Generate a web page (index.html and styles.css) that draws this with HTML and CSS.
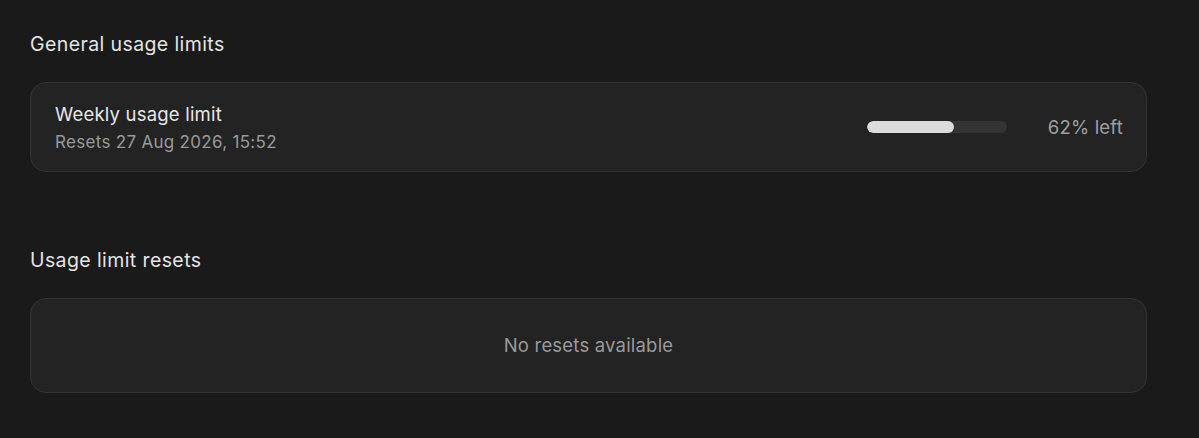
FILE: index.html
```html
<!DOCTYPE html>
<html lang="en">
<head>
<meta charset="utf-8">
<link rel="stylesheet" href="styles.css">
</head>
<body>
<main class="page">
  <section class="section">
    <h2 class="section-title">General usage limits</h2>
    <div class="card limit-card">
      <div class="limit-info">
        <div class="limit-name">Weekly usage limit</div>
        <div class="limit-reset">Resets 27 Aug 2026, 15:52</div>
      </div>
      <div class="limit-meter">
        <div class="bar"><div class="bar-fill" style="width:62%"></div></div>
        <div class="limit-left">62% left</div>
      </div>
    </div>
  </section>
  <section class="section">
    <h2 class="section-title">Usage limit resets</h2>
    <div class="card empty-card">No resets available</div>
  </section>
</main>
</body>
</html>
```
FILE: styles.css
```css
html, body {
  margin: 0;
  padding: 0;
  background: #1a1a1a;
}
body {
  font-family: Inter, "Noto Sans", "Liberation Sans", sans-serif;
  color: #e6e6e6;
  -webkit-font-smoothing: antialiased;
}
.page {
  width: 1117px;
  padding: 32px 0 0 30px;
  display: flex;
  flex-direction: column;
  gap: 76px;
}
.section {
  display: flex;
  flex-direction: column;
  gap: 26px;
}
.section-title {
  margin: 0;
  font-size: 19.5px;
  line-height: 24px;
  font-weight: 400;
  color: #e4e4e4;
  letter-spacing: 0.4px;
}
.card {
  box-sizing: border-box;
  background: #232323;
  border: 1px solid #343434;
  border-radius: 16px;
}
.limit-card {
  height: 90px;
  padding: 0 23px 0 24px;
  display: flex;
  align-items: center;
  justify-content: space-between;
}
.limit-info {
  display: flex;
  flex-direction: column;
  gap: 6px;
  padding-top: 2px;
}
.limit-name {
  font-size: 18.5px;
  line-height: 22px;
  color: #e8e8e8;
  letter-spacing: 0.2px;
}
.limit-reset {
  font-size: 17px;
  line-height: 22px;
  color: #9a9a9a;
  letter-spacing: 0.3px;
}
.limit-meter {
  display: flex;
  align-items: center;
  gap: 41px;
}
.bar {
  width: 140px;
  height: 12px;
  border-radius: 6px;
  background: #343434;
  overflow: hidden;
}
.bar-fill {
  height: 100%;
  border-radius: 6px;
  background: #dcdcdc;
}
.limit-left {
  font-size: 18.5px;
  line-height: 22px;
  color: #a0a0a0;
  letter-spacing: 0.2px;
}
.empty-card {
  height: 95px;
  display: flex;
  align-items: center;
  justify-content: center;
  font-size: 18.5px;
  color: #9a9a9a;
  letter-spacing: 0.2px;
  padding-bottom: 1px;
}
```
